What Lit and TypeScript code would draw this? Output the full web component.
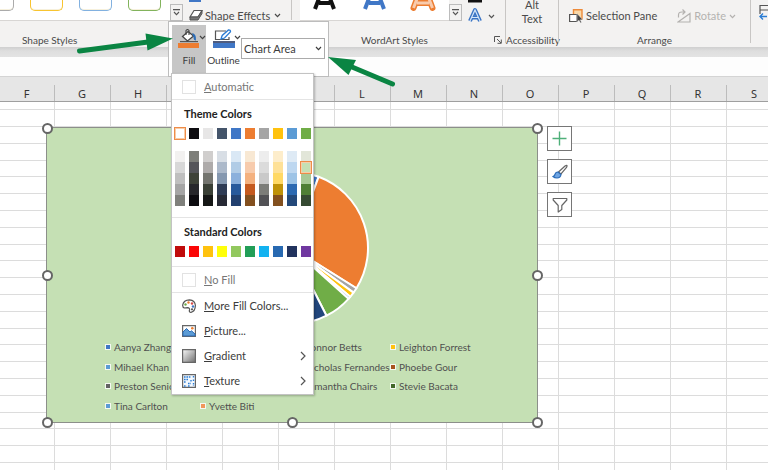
import { LitElement, html, css, svg } from "lit";
import { customElement } from "lit/decorators.js";
import { styleMap } from "lit/directives/style-map.js";

const COLUMNS = "FGHIJKLMNOPQRSTUVWXYZ".split("");
const ROWS = Array.from({ length: 60 }, (_, i) => i);

const THEME = [
  { top: "#ffffff", shades: ["#f2f1f0", "#d8d8d8", "#bfbfbf", "#a5a5a5", "#7f807c"] },
  { top: "#0d0c10", shades: ["#7e7f7a", "#55555a", "#3e4238", "#27272b", "#0d0c10"] },
  { top: "#e7e6e6", shades: ["#d0cecd", "#aeabaa", "#74756f", "#3a4036", "#151716"] },
  { top: "#44546a", shades: ["#d8dee5", "#acb9ca", "#8598b0", "#2f3c55", "#272a35"] },
  { top: "#4077c6", shades: ["#dae8f5", "#b1cce6", "#8bb0dc", "#285a9c", "#22406f"] },
  { top: "#ed7d31", shades: ["#f8e8d3", "#f7cbac", "#f4b17f", "#c55a1f", "#83501f"] },
  { top: "#a5a5a5", shades: ["#ededed", "#dbdbdb", "#c9c9c9", "#7c7d79", "#525256"] },
  { top: "#ffc20e", shades: ["#fdedcb", "#fee198", "#ffd965", "#bf9209", "#83501f"] },
  { top: "#5b9bd5", shades: ["#deeaf5", "#bdd7f0", "#9cc3e6", "#2c69b1", "#24497a"] },
  { top: "#70ad47", shades: ["#e2e6d9", "#c5e0b4", "#a8c996", "#4f7f35", "#354a32"] },
];

const STANDARD = [
  { name: "Dark Red", hex: "#c00b0b" },
  { name: "Red", hex: "#fb0606" },
  { name: "Orange", hex: "#ffc20e" },
  { name: "Yellow", hex: "#ffff0a" },
  { name: "Light Green", hex: "#92c85e" },
  { name: "Green", hex: "#229e57" },
  { name: "Light Blue", hex: "#12b2f0" },
  { name: "Blue", hex: "#2869b1" },
  { name: "Dark Blue", hex: "#22335e" },
  { name: "Purple", hex: "#7038a0" },
];

const LEGEND = [
  { name: "Aanya Zhang", hex: "#4077c6", col: 1, row: 1 },
  { name: "Connor Betts", hex: "#a5a5a5", col: 3, row: 1 },
  { name: "Leighton Forrest", hex: "#ffc20e", col: 4, row: 1 },
  { name: "Mihael Khan", hex: "#5b9bd5", col: 1, row: 2 },
  { name: "Nicholas Fernandes", hex: "#22406f", col: 3, row: 2 },
  { name: "Phoebe Gour", hex: "#a8541f", col: 4, row: 2 },
  { name: "Preston Senior", hex: "#636363", col: 1, row: 3 },
  { name: "Samantha Chairs", hex: "#285a9c", col: 3, row: 3 },
  { name: "Stevie Bacata", hex: "#43682b", col: 4, row: 3 },
  { name: "Tina Carlton", hex: "#5b9bd5", col: 1, row: 4 },
  { name: "Yvette Biti", hex: "#f1975a", col: 2, row: 4 },
];

// Slice angles in degrees, clockwise from twelve o'clock.
const SLICES = [
  { from: 0, to: 20.5, hex: "#4077c6" },
  { from: 20.5, to: 122, hex: "#ed7d31" },
  { from: 122, to: 126, hex: "#a5a5a5" },
  { from: 126, to: 130, hex: "#ffc20e" },
  { from: 130, to: 132, hex: "#9cc3e6" },
  { from: 132, to: 153, hex: "#70ad47" },
  { from: 153, to: 200, hex: "#22467c" },
  { from: 200, to: 360, hex: "#9e480e" },
];

const slicePath = (from: number, to: number, r = 76, c = 78) => {
  const pt = (deg: number) => {
    const a = (deg * Math.PI) / 180;
    return `${(c + r * Math.sin(a)).toFixed(2)} ${(c - r * Math.cos(a)).toFixed(2)}`;
  };
  return `M${c} ${c}L${pt(from)}A${r} ${r} 0 ${to - from > 180 ? 1 : 0} 1 ${pt(to)}Z`;
};

const chevron = () => html`<svg class="chev" width="7" height="5" viewBox="0 0 7 5" aria-hidden="true">
  <path d="M1 1L3.5 3.6L6 1" fill="none" stroke="currentColor" stroke-width="1.2" />
</svg>`;

const chevronRight = () => html`<svg class="more" width="6" height="10" viewBox="0 0 6 10" aria-hidden="true">
  <path d="M1 1L5 5L1 9" fill="none" stroke="#555" stroke-width="1.2" />
</svg>`;

@customElement("excel-ribbon")
export class ExcelRibbon extends LitElement {
  static styles = css`
    :host {
      display: block;
      font: 11px/14px Lato, "Noto Sans", sans-serif;
      color: #4a4a4a;
    }
    .ribbon {
      display: flex;
      height: 47px;
      background: #f3f2f1;
      overflow: hidden;
    }
    .edge {
      height: 10px;
      background: linear-gradient(#cfcfcf, #dedede 4px, #e3e3e3);
    }
    .bar {
      height: 19px;
      background: #fdfdfd;
      border-bottom: 1px solid #d4d4d4;
    }
    button {
      font: inherit;
      color: inherit;
      background: none;
      border: 0;
      padding: 0;
      display: flex;
      align-items: center;
      white-space: nowrap;
    }
    .group {
      display: flex;
      flex-direction: column;
      flex: none;
    }
    .tools {
      display: flex;
      height: 21px;
      align-items: flex-end;
    }
    .caption {
      font-size: 10px;
      line-height: 14px;
      padding-top: 12px;
      text-align: center;
    }
    .rule {
      width: 1px;
      flex: none;
      height: 43px;
      background: #c8c6c4;
    }
    .rule.short {
      height: 20px;
    }
    .shapes {
      width: 291px;
    }
    .shapes .caption {
      text-align: left;
      padding-left: 22px;
    }
    .gallery {
      display: flex;
      gap: 16px;
      background: #fff;
      height: 20px;
      border-bottom: 1px solid #d8d6d4;
      box-sizing: content-box;
    }
    .shapes .gallery {
      width: 170px;
    }
    .thumb {
      box-sizing: border-box;
      width: 33px;
      height: 11px;
      border: 1px solid;
      border-top: 0;
      border-radius: 0 0 5px 5px;
      box-shadow: inset 0 -1px 0 #f6f0dc;
    }
    .thumb.first {
      width: 14px;
      border-left: 0;
      border-radius: 0 0 5px 0;
    }
    .grey { border-color: #ababab; }
    .gold { border-color: #f8c430; }
    .blue { border-color: #82b1e0; }
    .green { border-color: #82b35c; }
    .expand {
      box-sizing: border-box;
      width: 13px;
      height: 17px;
      border: 1px solid #bcbcbc;
      justify-content: center;
      flex: none;
    }
    .effects {
      height: 21px;
      margin-left: 6px;
    }
    .effects .label {
      align-self: flex-end;
      line-height: 11px;
      padding: 0 4px 0 2px;
    }
    .effects svg {
      align-self: flex-end;
    }
    .effects .chev {
      margin-bottom: 3px;
    }
    .art {
      width: 213px;
      padding-left: 8px;
      box-sizing: border-box;
    }
    .art .gallery {
      width: 149px;
    }
    .art .caption {
      display: flex;
      justify-content: space-between;
      align-items: center;
      padding-left: 61px;
      padding-right: 3px;
    }
    .fx {
      align-self: flex-start;
      gap: 6px;
      margin-left: 6px;
    }
    .access {
      width: 52px;
    }
    .access button {
      flex-direction: column;
      width: 100%;
      line-height: 14px;
      justify-content: flex-end;
      height: 26px;
    }
    .access .tools {
      height: 26px;
    }
    .access .caption {
      padding-top: 7px;
      white-space: nowrap;
    }
    .arrange {
      width: 191px;
    }
    .arrange .tools {
      padding-left: 10px;
      height: 23px;
      justify-content: space-between;
      padding-right: 14px;
    }
    .arrange .caption {
      padding-top: 10px;
    }
    .arrange button {
      height: 14px;
      gap: 3px;
    }
    .arrange button:disabled {
      color: #b4b2b0;
    }
    .rest {
      padding: 4px 0 0 8px;
    }
  `;

  render() {
    const expand = html`<button class="expand" aria-label="More styles">
      <svg width="7" height="7" viewBox="0 0 7 7"><path d="M0 .6H7M1 3L3.5 5.6L6 3" fill="none" stroke="#555" stroke-width="1.1" /></svg>
    </button>`;
    return html`
      <div class="ribbon">
        <div class="group shapes">
          <div class="tools">
            <div class="gallery">
              <span class="thumb first grey"></span><span class="thumb gold"></span><span class="thumb blue"></span><span class="thumb green"></span>
            </div>
            ${expand}
            <button class="effects">
              <svg width="14" height="21" viewBox="0 0 14 21">
                <path d="M0 0H12V2H0Z" fill="#4077c6" />
                <path d="M5 10.500H13L9 17H1Z" fill="#fff" stroke="#555" stroke-width="1.200" />
                <path d="M1 17V20H9L13 13.500V10.500L9 17Z" fill="#777" stroke="#555" stroke-linejoin="round" />
              </svg>
              <span class="label">Shape Effects</span>${chevron()}
            </button>
          </div>
          <div class="caption">Shape Styles</div>
        </div>
        <span class="rule short"></span>
        <div class="group art">
          <div class="tools">
            <div class="gallery">
              <svg width="149" height="20" viewBox="0 0 149 20">
                <g fill="none" stroke-linejoin="round">
                  <path d="M15 9L24.500 -16L34 9M19 3H30" stroke="#111" stroke-width="4" />
                  <path d="M65 9L74.500 -16L84 9M69 3H80" stroke="#4077c6" stroke-width="4" />
                  <path d="M113.500 8L123 -17L132.500 8M117 3H129" stroke="#ed7d31" stroke-width="6" stroke-linecap="round" />
                  <path d="M113.500 8L123 -17L132.500 8M117 3H129" stroke="#f8cbad" stroke-width="3" />
                </g>
              </svg>
            </div>
            ${expand}
            <button class="fx" aria-label="Text effects">
              <svg width="14" height="23" viewBox="0 0 14 23">
                <path d="M0 0H14V2.500H0Z" fill="#111" />
                <path d="M2 21L7 10L12 21M4 17.500H10" fill="none" stroke="#3a74c4" stroke-width="4" stroke-linejoin="round" />
                <path d="M2 21L7 10L12 21M4 17.500H10" fill="none" stroke="#d5e6f8" stroke-width="1.200" />
              </svg>
              <svg width="7" height="23" viewBox="0 0 7 23"><path d="M1 15L3.500 17.600L6 15" fill="none" stroke="#555" stroke-width="1.200" /></svg>
            </button>
          </div>
          <div class="caption">
            WordArt Styles
            <svg width="8" height="8" viewBox="0 0 8 8"><path d="M.5 6V.5H6M3 3L7 7M7.300 3.500V7.300H3.500" fill="none" stroke="#555" /></svg>
          </div>
        </div>
        <span class="rule"></span>
        <div class="group access">
          <div class="tools"><button><span>Alt</span><span>Text</span></button></div>
          <div class="caption">Accessibility</div>
        </div>
        <span class="rule"></span>
        <div class="group arrange">
          <div class="tools">
            <button>
              <svg width="14" height="14" viewBox="0 0 14 14">
                <path d="M4.500 .8H13V10H4.500Z" fill="#fbd9a8" stroke="#ed8b3a" stroke-width="1.400" />
                <path d="M.6 5.500H8V12.500H.6Z" fill="#fff" stroke="#555" stroke-width="1.200" />
                <path d="M8 4.500V13L10 11.200L11.500 14L12.500 13.300L11.300 10.800H13.800Z" fill="#444" stroke="#fff" stroke-width=".4" />
              </svg>
              Selection Pane
            </button>
            <button disabled>
              <svg width="14" height="14" viewBox="0 0 14 14">
                <path d="M1 13H13V4.500ZM1.500 8.500V6Q1.500 3 5 3H8M5.500 .5L8 3L5.500 5.500" fill="none" stroke="#b4b2b0" stroke-width="1.200" />
              </svg>
              Rotate ${chevron()}
            </button>
          </div>
          <div class="caption">Arrange</div>
        </div>
        <span class="rule"></span>
        <div class="rest">
          <svg width="14" height="16" viewBox="0 0 14 16">
            <path d="M1 10V1.500H14M1 6H14" fill="none" stroke="#555" stroke-width="1.200" />
            <path d="M8 12.500H1M4 9.500L1 12.500L4 15.500" fill="none" stroke="#2b7cd3" stroke-width="1.400" />
          </svg>
        </div>
      </div>
      <div class="edge"></div>
      <div class="bar"></div>
    `;
  }
}

@customElement("pie-chart")
export class PieChart extends LitElement {
  static styles = css`
    :host {
      display: block;
      box-sizing: border-box;
      position: relative;
      background: #c5e0b4;
      border: 1px solid #8c8f8a;
      padding-top: 42px;
      font: 10px/20px Lato, "Noto Sans", sans-serif;
      color: #505050;
    }
    .pie {
      display: block;
      margin: 0 auto;
    }
    .legend {
      list-style: none;
      margin: 11px 0 6px;
      padding: 0 0 0 58px;
      display: grid;
      grid-template-columns: repeat(4, 95px);
      grid-template-rows: 20px 19px 20px 20px;
      align-items: center;
    }
    .legend li {
      display: flex;
      align-items: center;
      gap: 3px;
      white-space: nowrap;
    }
    .key {
      box-sizing: border-box;
      width: 6px;
      height: 6px;
      border: 1px solid #f4f8f1;
      flex: none;
    }
    .c1 { grid-column: 1; }
    .c2 { grid-column: 2; }
    .c3 { grid-column: 3; }
    .c4 { grid-column: 4; }
    .r1 { grid-row: 1; }
    .r2 { grid-row: 2; }
    .r3 { grid-row: 3; }
    .r4 { grid-row: 4; }
    .grip {
      position: absolute;
      box-sizing: border-box;
      width: 11px;
      height: 11px;
      margin: -5px;
      border: 2px solid #666;
      border-radius: 50%;
      background: #fff;
    }
    .t { top: 0; }
    .m { top: 50%; }
    .b { top: 100%; }
    .l { left: 0; }
    .c { left: 50%; }
    .r { left: 100%; }
  `;

  render() {
    return html`
      <svg class="pie" width="156" height="156" viewBox="0 0 156 156" role="img" aria-label="Pie chart">
        ${SLICES.map((s) => svg`<path d=${slicePath(s.from, s.to)} fill=${s.hex} stroke="#fff" stroke-width="2" stroke-linejoin="round" />`)}
      </svg>
      <ul class="legend">
        ${LEGEND.map(
          (e) => html`<li class="c${e.col} r${e.row}"><span class="key" style=${styleMap({ background: e.hex })}></span>${e.name}</li>`
        )}
      </ul>
      ${["t l", "t c", "t r", "m l", "m r", "b l", "b c", "b r"].map((p) => html`<span class="grip ${p}"></span>`)}
    `;
  }
}

@customElement("sheet-grid")
export class SheetGrid extends LitElement {
  static styles = css`
    :host {
      display: block;
      position: relative;
      overflow: hidden;
      background: #fff;
    }
    table {
      table-layout: fixed;
      width: 1175px;
      border-collapse: separate;
      border-spacing: 0;
    }
    col {
      width: 56px;
    }
    col:first-child {
      width: 55px;
    }
    th {
      box-sizing: border-box;
      height: 25px;
      padding: 9px 2px 0 0;
      font: 11px/15px "Noto Sans", "Open Sans", sans-serif;
      color: #333;
      background: linear-gradient(#bcbcbc, #bcbcbc) right bottom / 1px 16px no-repeat #e6e6e6;
      border-bottom: 1px solid #9f9f9f;
    }
    td {
      box-sizing: border-box;
      height: 17px;
      padding: 0;
      border-right: 1px solid #dcdcdc;
      border-bottom: 1px solid #dcdcdc;
    }
    .row:nth-child(5n) td {
      height: 16px;
    }
    .row:first-child td {
      height: 8px;
    }
    .chart {
      position: absolute;
      top: 50px;
      left: 46px;
      width: 492px;
    }
    .side {
      position: absolute;
      top: 49px;
      left: 547px;
      display: flex;
      flex-direction: column;
      gap: 8px;
    }
    .side button {
      box-sizing: border-box;
      width: 25px;
      height: 25px;
      padding: 0;
      border: 1px solid #767676;
      background: #fff;
      display: grid;
      place-items: center;
    }
  `;

  render() {
    return html`
      <table>
        <colgroup>${COLUMNS.map(() => html`<col />`)}</colgroup>
        <thead>
          <tr>${COLUMNS.map((c) => html`<th scope="col">${c}</th>`)}</tr>
        </thead>
        <tbody>
          ${ROWS.map(() => html`<tr class="row">${COLUMNS.map(() => html`<td></td>`)}</tr>`)}
        </tbody>
      </table>
      <pie-chart class="chart"></pie-chart>
      <div class="side">
        <button aria-label="Chart Elements">
          <svg width="15" height="15" viewBox="0 0 15 15"><path d="M7.500 .5V14.500M.5 7.500H14.500" stroke="#4fb07a" stroke-width="1.400" /></svg>
        </button>
        <button aria-label="Chart Styles">
          <svg width="16" height="16" viewBox="0 0 16 16">
            <path d="M6.500 8L13 2Q14.500 1 15 1.500Q15.300 2 14.500 3.500L9 10Z" fill="#fff" stroke="#666" stroke-width="1.200" />
            <path d="M1 12.500Q2.500 12 3 10.500Q3.500 8 6 8L9 10.500Q8.500 14 5 14Q2.500 14 1 12.500Z" fill="#6fa5e3" stroke="#2b6cb8" stroke-width="1.200" />
          </svg>
        </button>
        <button aria-label="Chart Filters">
          <svg width="16" height="16" viewBox="0 0 16 16">
            <path d="M1.200 1.500H14.800V3L9.800 8.500V12.500L6.200 15V8.500L1.200 3Z" fill="#fff" stroke="#666" stroke-width="1.200" stroke-linejoin="round" />
          </svg>
        </button>
      </div>
    `;
  }
}

@customElement("fill-popup")
export class FillPopup extends LitElement {
  static styles = css`
    :host {
      display: block;
      font: 11px/14px Lato, "Noto Sans", sans-serif;
      color: #3c3c3c;
    }
    button,
    select {
      font: inherit;
      color: inherit;
      background: none;
      border: 0;
      padding: 0;
      margin: 0;
    }
    .mini {
      box-sizing: border-box;
      display: flex;
      width: 161px;
      height: 56px;
      padding: 3px 2px 2px 3px;
      background: #fff;
      border: 1px solid #bdbdbd;
    }
    .tool {
      width: 34px;
      height: 49px;
      flex: none;
      display: flex;
      flex-direction: column;
      align-items: center;
      gap: 5px;
      font-size: 10px;
      padding-top: 4px;
    }
    .tool.on {
      background: #c6c6c6;
    }
    .tool svg {
      flex: none;
    }
    .tool.line {
      width: 35px;
    }
    .pick {
      position: relative;
      align-self: flex-start;
      margin-top: 13px;
      width: 84px;
      height: 21px;
      flex: none;
    }
    .pick select {
      appearance: none;
      box-sizing: border-box;
      width: 100%;
      height: 100%;
      border: 1px solid #ababab;
      padding: 0 2px;
    }
    .pick svg {
      position: absolute;
      right: 3px;
      top: 8px;
    }
    .menu {
      box-sizing: border-box;
      width: 143px;
      margin: -4px 0 0 3px;
      padding-bottom: 1px;
      position: relative;
      background: #fff;
      border: 1px solid #c3c3c3;
      box-shadow: 1px 1px 2px rgba(0, 0, 0, 0.25);
    }
    .item {
      display: flex;
      align-items: center;
      width: 100%;
      height: 25px;
      padding: 0 7px 0 10px;
      gap: 8px;
      text-align: left;
    }
    .item .text {
      flex: 1;
    }
    .muted {
      color: #767676;
    }
    .box {
      box-sizing: border-box;
      width: 14px;
      height: 14px;
      border: 1px solid #e2e2e2;
    }
    .split {
      border-bottom: 1px solid #e4e4e4;
    }
    .title {
      margin: 0;
      padding: 7px 0 7px 12px;
      font-size: 11px;
      line-height: 14px;
      font-weight: 700;
      color: #222;
    }
    .swatches {
      display: flex;
      gap: 4px;
      padding-left: 3px;
    }
    .swatch {
      display: block;
      width: 10px;
      height: 11px;
    }
    .swatches.theme {
      padding-bottom: 12px;
    }
    .swatches.shades {
      padding-bottom: 11px;
    }
    .swatches.std {
      padding-bottom: 9px;
    }
    .picked {
      outline: 1px solid #ee8c48;
      box-shadow: inset 0 0 0 1px #f8cda8;
      position: relative;
    }
  `;

  private item(label: string, icon: unknown, arrow = false, cls = "") {
    return html`<button class="item ${cls}" role="menuitem">
      ${icon}<span class="text"><u>${label[0]}</u>${label.slice(1)}</span>${arrow ? chevronRight() : ""}
    </button>`;
  }

  private swatch(hex: string, name: string, picked = false) {
    return html`<button class="swatch ${picked ? "picked" : ""}" aria-label=${name} style=${styleMap({ background: hex })}></button>`;
  }

  render() {
    const box = html`<span class="box"></span>`;
    const palette = html`<svg width="14" height="14" viewBox="0 0 14 14">
      <path d="M.7 6Q1.500 1 7.500 .8Q13 1.200 13.400 6.500Q13.200 12.500 9 13.300Q6.800 13.300 7.500 11Q8 8.800 5.500 8.600L2.500 9Q.5 8.500 .7 6Z" fill="#fff" stroke="#555" stroke-width="1.200" />
      <circle cx="3.500" cy="5.500" r="1.200" fill="#70ad47" /><circle cx="6.500" cy="3.500" r="1.200" fill="#ed7d31" />
      <circle cx="10" cy="4.500" r="1.200" fill="#d64b4b" /><circle cx="11" cy="7.500" r="1.200" fill="#4077c6" /><circle cx="10" cy="10.300" r="1.100" fill="#555" />
    </svg>`;
    const picture = html`<svg width="14" height="12" viewBox="0 0 14 12">
      <path d="M.6 .6H13.400V11.400H.6Z" fill="#fff" stroke="#666" stroke-width="1.200" />
      <path d="M1 10.800V7L4.500 3.500L8 7L9.500 5.800L13 9V10.800Z" fill="#5b9bd5" stroke="#2b6cb8" />
      <circle cx="10.300" cy="3.300" r="1.300" fill="#ed7d31" />
    </svg>`;
    const gradient = html`<svg width="14" height="14" viewBox="0 0 14 14">
      <defs><linearGradient id="g" x1="0" y1="0" x2="1" y2="1"><stop offset="0" stop-color="#fafafa" /><stop offset="1" stop-color="#6e6e6e" /></linearGradient></defs>
      <path d="M.6 .6H13.400V13.400H.6Z" fill="url(#g)" stroke="#666" stroke-width="1.200" />
    </svg>`;
    const texture = html`<svg width="14" height="14" viewBox="0 0 14 14">
      <path d="M.6 .6H13.400V13.400H.6Z" fill="#f4f9fe" stroke="#666" stroke-width="1.200" />
      <path d="M2 3H9M2 5.500H6M2 8H4M2 12H4.500M6 12H8M11.500 2V4M11.500 5.500V7.500M9 6V8M6 9.500H9M11.500 9V12" stroke="#2b7cd3" stroke-width="1.400" stroke-dasharray="1.600 .8" />
    </svg>`;

    return html`
      <div class="mini">
        <button class="tool on">
          <svg width="34" height="19" viewBox="0 0 34 19">
            <path d="M6 14H27V19H6Z" fill="#ed7d31" /><path d="M8 12.600H26" stroke="#555" stroke-width="1.200" />
            <path d="M16 2.500L21.500 7L15.500 12L10.500 7.500Z" fill="#fff" stroke="#444" stroke-width="1.300" />
            <path d="M14 6V1.500Q15.500 -.5 17 1.500V6" fill="none" stroke="#444" stroke-width="1.100" />
            <path d="M20 4Q24.500 4.500 24 11.500Q21.500 11.500 21.500 8Z" fill="#2b6cb8" />
            <path d="M28 7L30.500 9.600L33 7" fill="none" stroke="#444" stroke-width="1.200" />
          </svg>
          Fill
        </button>
        <button class="tool line">
          <svg width="34" height="19" viewBox="0 0 34 19">
            <path d="M6 14H28V19H6Z" fill="#4077c6" /><path d="M6 13H28" stroke="#22335e" stroke-width="1.600" />
            <path d="M19 2H8.500V10.500H22V8" fill="none" stroke="#555" stroke-width="1.200" />
            <path d="M14 10L15.200 6.500L21.500 1Q23.500 .8 23.500 2.800L17.500 9Z" fill="#fff" stroke="#2b7cd3" stroke-width="1.300" />
            <path d="M28 7L30.500 9.600L33 7" fill="none" stroke="#444" stroke-width="1.200" />
          </svg>
          Outline
        </button>
        <div class="pick">
          <select aria-label="Chart element">
            <option>Chart Area</option>
          </select>
          ${chevron()}
        </div>
      </div>
      <div class="menu" role="menu">
        <div class="split">${this.item("Automatic", box, false, "muted")}</div>
        <h3 class="title">Theme Colors</h3>
        <div class="swatches theme">${THEME.map((t, i) => this.swatch(t.top, `Theme ${i + 1}`, i === 0))}</div>
        <div class="swatches shades">
          ${THEME.map((t, i) => html`<div>${t.shades.map((s, j) => this.swatch(s, `Theme ${i + 1} shade ${j + 1}`, i === 9 && j === 1))}</div>`)}
        </div>
        <div class="split"></div>
        <h3 class="title">Standard Colors</h3>
        <div class="swatches std">${STANDARD.map((s) => this.swatch(s.hex, s.name))}</div>
        <div class="split"></div>
        <div class="split">${this.item("No Fill", box, false, "muted")}</div>
        ${this.item("More Fill Colors...", palette)} ${this.item("Picture...", picture)}
        ${this.item("Gradient", gradient, true)} ${this.item("Texture", texture, true)}
      </div>
    `;
  }
}

@customElement("app-root")
export class AppRoot extends LitElement {
  static styles = css`
    :host {
      display: flex;
      flex-direction: column;
      position: relative;
      height: 100vh;
      overflow: hidden;
    }
    .sheet {
      flex: 1;
      min-height: 0;
    }
    .popup {
      position: absolute;
      left: 168px;
      top: 21px;
    }
    .arrow {
      position: absolute;
      fill: #0a8543;
      stroke: #0a8543;
    }
    .one {
      left: 76px;
      top: 32px;
    }
    .two {
      left: 328px;
      top: 56px;
    }
  `;

  render() {
    return html`
      <excel-ribbon></excel-ribbon>
      <sheet-grid class="sheet"></sheet-grid>
      <fill-popup class="popup"></fill-popup>
      <svg class="arrow one" width="98" height="24" viewBox="0 0 98 24" aria-hidden="true">
        <path d="M3.500 19L72 10" stroke-width="5" stroke-linecap="round" /><path d="M69.500 1.500L97 6.500L71.500 18.500Z" stroke="none" />
      </svg>
      <svg class="arrow two" width="70" height="32" viewBox="0 0 70 32" aria-hidden="true">
        <path d="M24 11L64.500 28" stroke-width="5" stroke-linecap="round" /><path d="M0 1L28 4L20.500 19Z" stroke="none" />
      </svg>
    `;
  }
}
